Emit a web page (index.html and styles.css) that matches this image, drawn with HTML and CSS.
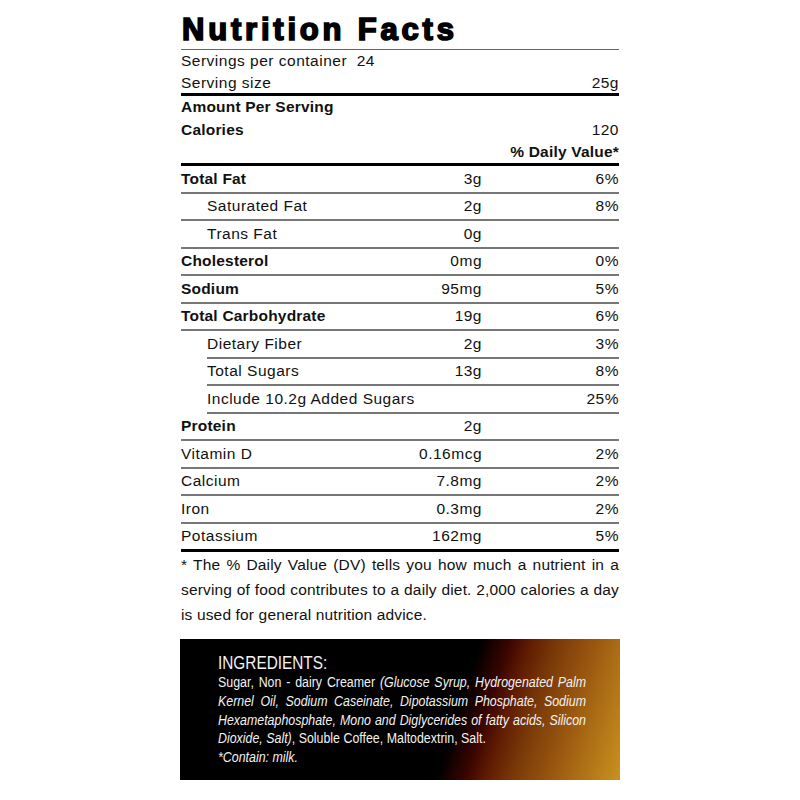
FILE: index.html
```html
<!DOCTYPE html>
<html lang="en">
<head>
  <meta charset="UTF-8" />
  <title>Nutrition Facts</title>
  <link rel="stylesheet" href="styles.css">
</head>
<body>
  <div class="label">
    <h1>Nutrition Facts</h1>

    <div class="servings">
      <div class="line first">Servings per container&nbsp;&nbsp;24</div>
      <div class="line second"><span>Serving size</span><span>25g</span></div>
    </div>

    <div class="amount">
      <div class="line bold">Amount Per Serving</div>
      <div class="line calories"><span class="bold">Calories</span><span>120</span></div>
      <div class="line dv bold">% Daily Value*</div>
    </div>

    <!-- nutrientes -->
    <div class="row bold-name"><span class="name">Total Fat</span><span class="amt">3g</span><span class="pct">6%</span></div>
    <div class="row sub"><span class="name">Saturated Fat</span><span class="amt">2g</span><span class="pct">8%</span></div>
    <div class="row sub"><span class="name">Trans Fat</span><span class="amt">0g</span><span class="pct"></span></div>
    <div class="row bold-name"><span class="name">Cholesterol</span><span class="amt">0mg</span><span class="pct">0%</span></div>
    <div class="row bold-name"><span class="name">Sodium</span><span class="amt">95mg</span><span class="pct">5%</span></div>
    <div class="row bold-name"><span class="name">Total Carbohydrate</span><span class="amt">19g</span><span class="pct">6%</span></div>
    <div class="row indent"><span class="name">Dietary Fiber</span><span class="amt">2g</span><span class="pct">3%</span></div>
    <div class="row indent"><span class="name">Total Sugars</span><span class="amt">13g</span><span class="pct">8%</span></div>
    <div class="row indent"><span class="name wide">Include 10.2g Added Sugars</span><span class="pct">25%</span></div>
    <div class="row bold-name"><span class="name">Protein</span><span class="amt">2g</span><span class="pct"></span></div>
    <div class="row"><span class="name">Vitamin D</span><span class="amt">0.16mcg</span><span class="pct">2%</span></div>
    <div class="row"><span class="name">Calcium</span><span class="amt">7.8mg</span><span class="pct">2%</span></div>
    <div class="row"><span class="name">Iron</span><span class="amt">0.3mg</span><span class="pct">2%</span></div>
    <div class="row last"><span class="name">Potassium</span><span class="amt">162mg</span><span class="pct">5%</span></div>

    <p class="note">
      <span class="full">* The % Daily Value (DV) tells you how much a nutrient in a</span>
      <span class="full">serving of food contributes to a daily diet. 2,000 calories a day</span>
      <span>is used for general nutrition advice.</span>
    </p>
  </div>

  <div class="ingredients">
    <h2>INGREDIENTS:</h2>
    <p>
      <span class="full">Sugar, Non - dairy Creamer <i>(Glucose Syrup, Hydrogenated Palm</i></span>
      <span class="full"><i>Kernel Oil, Sodium Caseinate, Dipotassium Phosphate, Sodium</i></span>
      <span class="full"><i>Hexametaphosphate, Mono and Diglycerides of fatty acids, Silicon</i></span>
      <span><i>Dioxide, Salt)</i>, Soluble Coffee, Maltodextrin, Salt.</span>
      <span><i>*Contain: milk.</i></span>
    </p>
  </div>
</body>
</html>
```

FILE: styles.css
```css
body {
  margin: 0;
  background-color: #fff;
  color: #111;
  font-family: "Liberation Sans", Arial, sans-serif;
}

.label {
  width: 438px;
  margin: 0 auto;
  padding-top: 14px;
  font-size: 15.5px;
  letter-spacing: 0.5px;
}

h1 {
  margin: 0;
  padding-bottom: 4px;
  padding-left: 1px;
  font-size: 31px;
  line-height: 31px;
  font-weight: bold;
  letter-spacing: 3.8px;
  -webkit-text-stroke: 1.7px #000;
  color: #000;
  border-bottom: 1px solid #666;
}

.line {
  display: flex;
  justify-content: space-between;
  align-items: center;
}

.bold {
  font-weight: bold;
  letter-spacing: 0.2px;
}

.servings {
  border-bottom: 3px solid #000;
}

.servings .first {
  height: 22px;
}

.servings .second {
  height: 21px;
}

.amount {
  border-bottom: 3px solid #000;
}

.amount .line {
  height: 22px;
}

.amount .calories {
  height: 23px;
}

.amount .dv {
  justify-content: flex-end;
}

.row {
  display: grid;
  grid-template-columns: 1fr 100px 137px;
  align-items: center;
  height: 25.5px;
  border-bottom: 2px solid #777;
}

.row .amt,
.row .pct {
  text-align: right;
}

.row .wide {
  grid-column: span 2;
  white-space: nowrap;
}

.bold-name .name {
  font-weight: bold;
  letter-spacing: 0.2px;
}

.row.sub {
  padding-left: 26px;
}

.row.indent {
  margin-left: 26px;
}

.row.last {
  border-bottom: 3px solid #000;
}

.note {
  margin: 0;
  line-height: 25px;
  letter-spacing: 0.15px;
}

.note span,
.ingredients p span {
  display: block;
  text-align: justify;
  white-space: nowrap;
}

.note .full,
.ingredients p .full {
  text-align-last: justify;
}

.ingredients {
  box-sizing: border-box;
  width: 440px;
  height: 141px;
  margin: 12px auto 0;
  padding: 14px 34px 0 38px;
  background: linear-gradient(108deg, #000 0%, #000 62%, #3a0500 68%, #5e1a02 72%, #7a3a08 78%, #9a5810 86%, #a86a14 90%, #c8921f 100%);
  color: #f2f2f2;
}

/* fonte estreita: Liberation Sans comprimida na horizontal */
.ingredients h2 {
  width: 140px;
  margin: 0;
  font-size: 18.5px;
  line-height: 20px;
  font-weight: normal;
  transform: scaleX(0.83);
  transform-origin: left top;
}

.ingredients p {
  width: 460px;
  margin: 0;
  font-size: 15.5px;
  line-height: 18.8px;
  transform: scaleX(0.8);
  transform-origin: left top;
}
```
